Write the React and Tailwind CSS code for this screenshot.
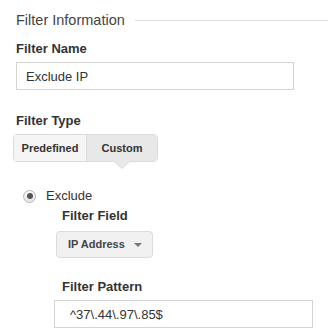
import React, { useState } from 'react';

const App = () => {
  const [name, setName] = useState('Exclude IP');
  const [pattern, setPattern] = useState('^37\\.44\\.97\\.85$');
  const [type, setType] = useState('custom');

  return (
    <div className="w-[328px] h-[332px] bg-white pl-4 pt-[11px] text-[#333] font-['Liberation_Sans',Arial,sans-serif] overflow-hidden">
      {/* Section header */}
      <div className="flex items-center h-[18px]">
        <span className="text-[14.5px] leading-[18px] text-[#444]">Filter Information</span>
        <div className="flex-1 h-px bg-[#dedede] ml-[10px]" />
      </div>

      <div className="mt-[12px] text-[13px] leading-4 font-bold">Filter Name</div>
      <input
        value={name}
        onChange={(e) => setName(e.target.value)}
        className="mt-[5px] block w-[278px] h-[28px] border border-[#d4d4d4] px-[9px] text-[13px] text-[#333] outline-none"
      />

      <div className="mt-[23px] text-[13px] leading-4 font-bold">Filter Type</div>
      <div className="mt-[5px] -ml-[3px] flex h-[28px] w-fit border border-[#dcdcdc] rounded-sm text-[11px] font-bold text-[#333]">
        <button
          onClick={() => setType('predefined')}
          className={`w-[73px] h-full border-r border-[#dcdcdc] ${type === 'predefined' ? 'bg-[#e8e8e8]' : 'bg-[#f5f5f5]'}`}
        >
          Predefined
        </button>
        <button
          onClick={() => setType('custom')}
          className={`relative w-[70px] h-full ${type === 'custom' ? 'bg-[#e8e8e8]' : 'bg-[#f5f5f5]'}`}
        >
          Custom
          {type === 'custom' && (
            <>
              <span className="absolute left-1/2 -translate-x-1/2 top-full w-0 h-0 border-l-[9px] border-r-[9px] border-t-[8px] border-l-transparent border-r-transparent border-t-[#dcdcdc]" />
              <span className="absolute left-1/2 -translate-x-1/2 top-full w-0 h-0 border-l-[8px] border-r-[8px] border-t-[7px] border-l-transparent border-r-transparent border-t-[#e8e8e8]" />
            </>
          )}
        </button>
      </div>

      {/* Radio */}
      <div className="mt-[26px] ml-[7px] flex items-center h-4">
        <span className="w-[13px] h-[13px] rounded-full border border-[#b5b5b5] bg-gradient-to-b from-[#fafafa] to-[#e6e6e6] flex items-center justify-center">
          <span className="w-[6px] h-[6px] rounded-full bg-[#555]" />
        </span>
        <span className="ml-[10px] text-[13px] leading-4 text-[#333]">Exclude</span>
      </div>

      <div className="ml-[46px] mt-[4px] text-[13px] leading-4 font-bold">Filter Field</div>
      <button className="mt-[7px] ml-[40px] flex items-center w-[97px] h-[27px] bg-[#f1f1f1] border border-[#dcdcdc] rounded-sm pl-[11px] text-[11px] font-bold text-[#444]">
        <span>IP Address</span>
        <span className="ml-auto mr-[10px] w-0 h-0 border-l-[4px] border-r-[4px] border-t-[4px] border-l-transparent border-r-transparent border-t-[#777]" />
      </button>

      <div className="ml-[46px] mt-[21px] text-[13px] leading-4 font-bold">Filter Pattern</div>
      <input
        value={pattern}
        onChange={(e) => setPattern(e.target.value)}
        className="mt-[5px] ml-[38px] block w-[259px] h-[28px] border border-[#d4d4d4] px-[15px] text-[13px] text-[#333] outline-none"
      />
    </div>
  );
};

export default App;
